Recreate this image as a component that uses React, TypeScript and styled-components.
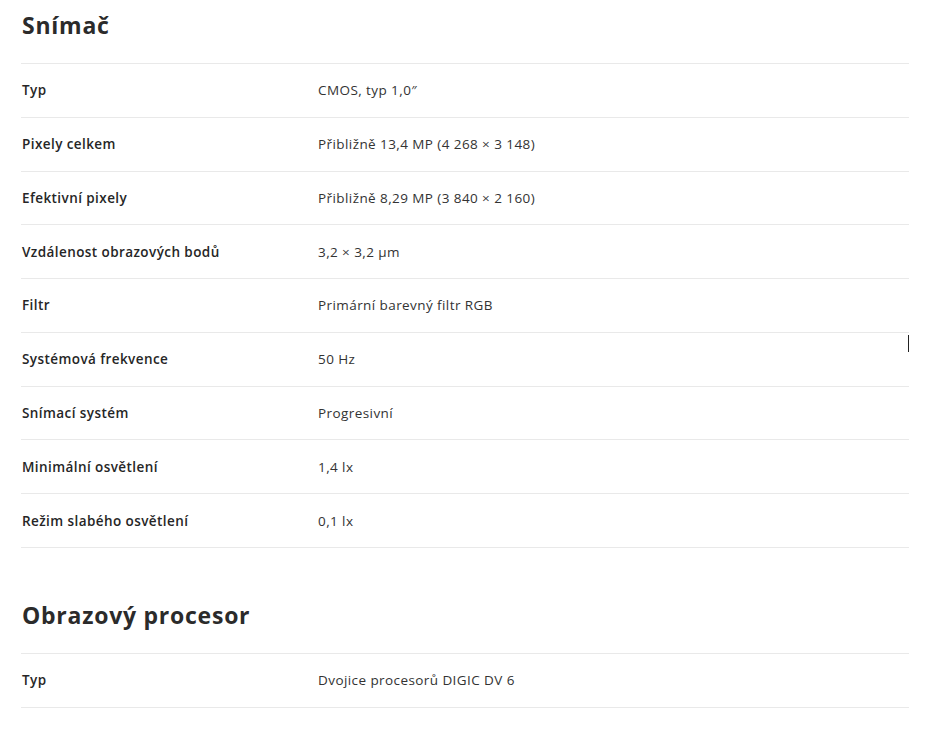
import styled, { createGlobalStyle } from "styled-components";

const GlobalStyle = createGlobalStyle`
  body {
    margin: 0;
    background: #ffffff;
    font-family: "Open Sans", "Liberation Sans", sans-serif;
    color: #333333;
  }
`;

interface ISpec {
  label: string;
  value: string;
}

interface ISection {
  title: string;
  rows: ISpec[];
}

const sections: ISection[] = [
  {
    title: "Snímač",
    rows: [
      { label: "Typ", value: "CMOS, typ 1,0″" },
      { label: "Pixely celkem", value: "Přibližně 13,4 MP (4 268 × 3 148)" },
      { label: "Efektivní pixely", value: "Přibližně 8,29 MP (3 840 × 2 160)" },
      { label: "Vzdálenost obrazových bodů", value: "3,2 × 3,2 µm" },
      { label: "Filtr", value: "Primární barevný filtr RGB" },
      { label: "Systémová frekvence", value: "50 Hz" },
      { label: "Snímací systém", value: "Progresivní" },
      { label: "Minimální osvětlení", value: "1,4 lx" },
      { label: "Režim slabého osvětlení", value: "0,1 lx" },
    ],
  },
  {
    title: "Obrazový procesor",
    rows: [{ label: "Typ", value: "Dvojice procesorů DIGIC DV 6" }],
  },
];

function App() {
  return (
    <Page>
      <GlobalStyle />
      {sections.map((section) => (
        <Section key={section.title}>
          <Title>{section.title}</Title>
          <Table>
            {section.rows.map((row, i) => (
              <Row key={row.label + i}>
                <Label>{row.label}</Label>
                <Value>{row.value}</Value>
              </Row>
            ))}
          </Table>
        </Section>
      ))}
      <Caret />
    </Page>
  );
}

const Page = styled.div`
  position: relative;
  width: 888px;
  margin-left: 21px;
  display: flex;
  flex-direction: column;
  gap: 42px;
`;

const Section = styled.section`
  display: flex;
  flex-direction: column;
  gap: 13px;
`;

const Title = styled.h2`
  margin: 0;
  height: 50px;
  line-height: 50px;
  font-size: 23px;
  font-weight: 700;
  letter-spacing: 0.75px;
  color: #2b2b2b;
  padding-left: 1px;
`;

const Table = styled.div`
  border-top: 1px solid #e9e9e9;
`;

const Row = styled.div`
  display: grid;
  grid-template-columns: 297px 1fr;
  align-items: center;
  height: 52.78px;
  border-bottom: 1px solid #e9e9e9;
  font-size: 13.5px;
  letter-spacing: 0.42px;
`;

const Label = styled.div`
  padding-left: 1px;
  font-weight: 600;
  color: #262626;
`;

const Value = styled.div`
  font-weight: 400;
  color: #333333;
`;

const Caret = styled.div`
  position: absolute;
  left: 887px;
  top: 335px;
  width: 1px;
  height: 17px;
  background: #222222;
`;

export default App;
